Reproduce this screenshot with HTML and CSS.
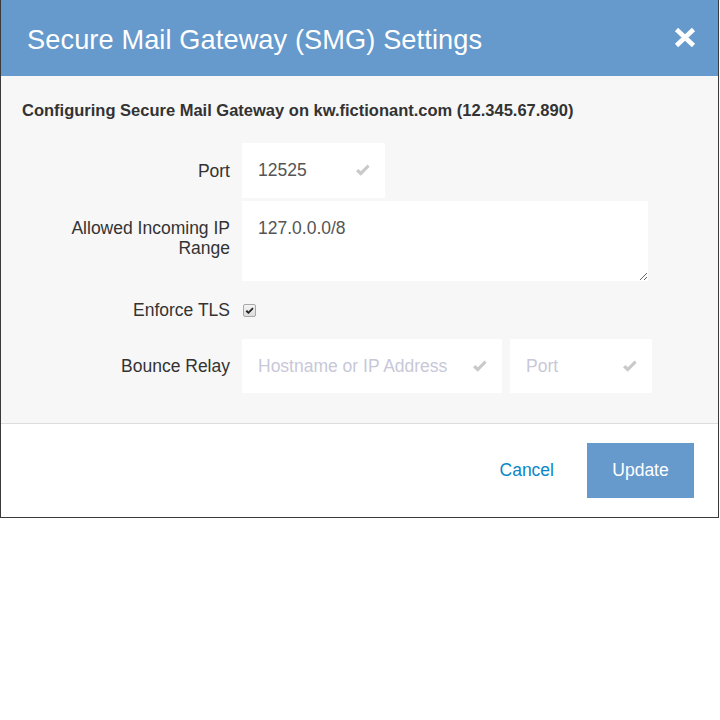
FILE: index.html
```html
<!DOCTYPE html>
<html>
<head>
<meta charset="utf-8">
<link rel="stylesheet" href="styles.css">
</head>
<body>
<div class="dialog">
  <div class="header">
    <h1 class="title">Secure Mail Gateway (SMG) Settings</h1>
    <span class="close" aria-label="Close">
      <svg width="22" height="21" viewBox="0 0 22 21"><path d="M2.5 2.5 L19.5 18.5 M19.5 2.5 L2.5 18.5" stroke="#fff" stroke-width="4.6" fill="none"/></svg>
    </span>
  </div>
  <div class="body">
    <p class="subtitle">Configuring Secure Mail Gateway on kw.fictionant.com (12.345.67.890)</p>
    <div class="form">
      <div class="row row-port">
        <label class="label">Port</label>
        <div class="field">
          <div class="input w-port"><span class="value">12525</span><svg class="check" width="15" height="13" viewBox="0 0 15 13"><path d="M1 7.2 L3.4 4.9 L5.8 7.3 L12.6 0.6 L14.6 2.8 L5.8 11.8 Z" fill="#c9c9c9"/></svg></div>
        </div>
      </div>
      <div class="row row-range">
        <label class="label label-multi">Allowed Incoming IP Range</label>
        <div class="field">
          <textarea class="textarea">127.0.0.0/8</textarea>
        </div>
      </div>
      <div class="row row-tls">
        <label class="label">Enforce TLS</label>
        <div class="field">
          <span class="checkbox"><svg width="9" height="8" viewBox="0 0 9 8"><path d="M0.6 4.4 L2 3 L3.5 4.5 L7.4 0.6 L8.6 1.8 L3.5 7 Z" fill="#222"/></svg></span>
        </div>
      </div>
      <div class="row row-relay">
        <label class="label">Bounce Relay</label>
        <div class="field field-pair">
          <div class="input w-host"><span class="placeholder">Hostname or IP Address</span><svg class="check" width="15" height="13" viewBox="0 0 15 13"><path d="M1 7.2 L3.4 4.9 L5.8 7.3 L12.6 0.6 L14.6 2.8 L5.8 11.8 Z" fill="#c9c9c9"/></svg></div>
          <div class="input w-port2"><span class="placeholder">Port</span><svg class="check" width="15" height="13" viewBox="0 0 15 13"><path d="M1 7.2 L3.4 4.9 L5.8 7.3 L12.6 0.6 L14.6 2.8 L5.8 11.8 Z" fill="#c9c9c9"/></svg></div>
        </div>
      </div>
    </div>
  </div>
  <div class="footer">
    <a class="cancel">Cancel</a>
    <button class="update">Update</button>
  </div>
</div>
</body>
</html>
```

FILE: styles.css
```css
html, body {
  margin: 0;
  padding: 0;
  background: #ffffff;
}
body {
  font-family: "Liberation Sans", Arial, sans-serif;
  font-size: 17.5px;
  color: #333333;
}
.dialog {
  width: 719px;
  box-sizing: border-box;
  border-left: 1px solid #3a3a3a;
  border-right: 1px solid #3a3a3a;
  border-bottom: 1px solid #3a3a3a;
}
.header {
  height: 76px;
  background: #6699cc;
  display: flex;
  align-items: center;
  justify-content: space-between;
  padding: 0 22px 0 26px;
}
.title {
  margin: 0;
  font-weight: normal;
  font-size: 27.2px;
  color: #ffffff;
  letter-spacing: 0.1px;
  padding-top: 3px;
}
.close {
  display: flex;
  width: 22px;
  height: 21px;
  margin-bottom: 1px;
}
.body {
  background: #f7f7f7;
  padding: 24px 0 30px 0;
  border-bottom: 1px solid #dddddd;
}
.subtitle {
  margin: 0 0 0 21px;
  font-weight: bold;
  font-size: 16.5px;
  line-height: 20px;
  color: #333333;
}
.form {
  margin-top: 23px;
  display: flex;
  flex-direction: column;
}
.row {
  display: flex;
  align-items: center;
  column-gap: 12px;
}
.label {
  width: 229px;
  flex: none;
  text-align: right;
  line-height: 20px;
  color: #333333;
}
.row-range {
  align-items: flex-start;
  margin-top: 3px;
}
.label-multi {
  padding-top: 17px;
  padding-left: 55px;
  box-sizing: border-box;
}
.row-tls {
  margin-top: 19px;
  height: 20px;
}
.row-relay {
  margin-top: 19px;
}
.field {
  display: flex;
}
.field-pair {
  column-gap: 8px;
}
.input {
  height: 55px;
  background: #ffffff;
  box-sizing: border-box;
  display: flex;
  align-items: center;
  justify-content: space-between;
  padding: 0 15px 0 16px;
}
.row-relay .input {
  height: 54px;
}
.w-port { width: 143px; }
.w-host { width: 260px; }
.w-port2 { width: 142px; }
.value {
  color: #555555;
}
.placeholder {
  color: #c8c8d8;
}
.check {
  display: block;
}
.textarea {
  width: 406px;
  height: 80px;
  box-sizing: border-box;
  border: none;
  background: #ffffff;
  padding: 17px 16px;
  font-family: "Liberation Sans", Arial, sans-serif;
  font-size: 17.5px;
  line-height: 20px;
  color: #555555;
  outline: none;
  margin: 0;
}
.checkbox {
  width: 13px;
  height: 13px;
  box-sizing: border-box;
  border: 1px solid #a8a8a8;
  border-radius: 2px;
  background: linear-gradient(#f4f4f4, #dcdcdc);
  display: flex;
  align-items: center;
  justify-content: center;
  margin-left: 1px;
  margin-top: 1px;
}
.footer {
  display: flex;
  justify-content: flex-end;
  align-items: center;
  padding: 19px 24px 19px 0;
  background: #ffffff;
}
.cancel {
  color: #0a86c6;
  font-size: 17.5px;
  margin-right: 33px;
  cursor: pointer;
}
.update {
  width: 107px;
  height: 55px;
  border: none;
  background: #6699cc;
  color: #ffffff;
  font-family: "Liberation Sans", Arial, sans-serif;
  font-size: 17.5px;
  padding: 0;
}
```
